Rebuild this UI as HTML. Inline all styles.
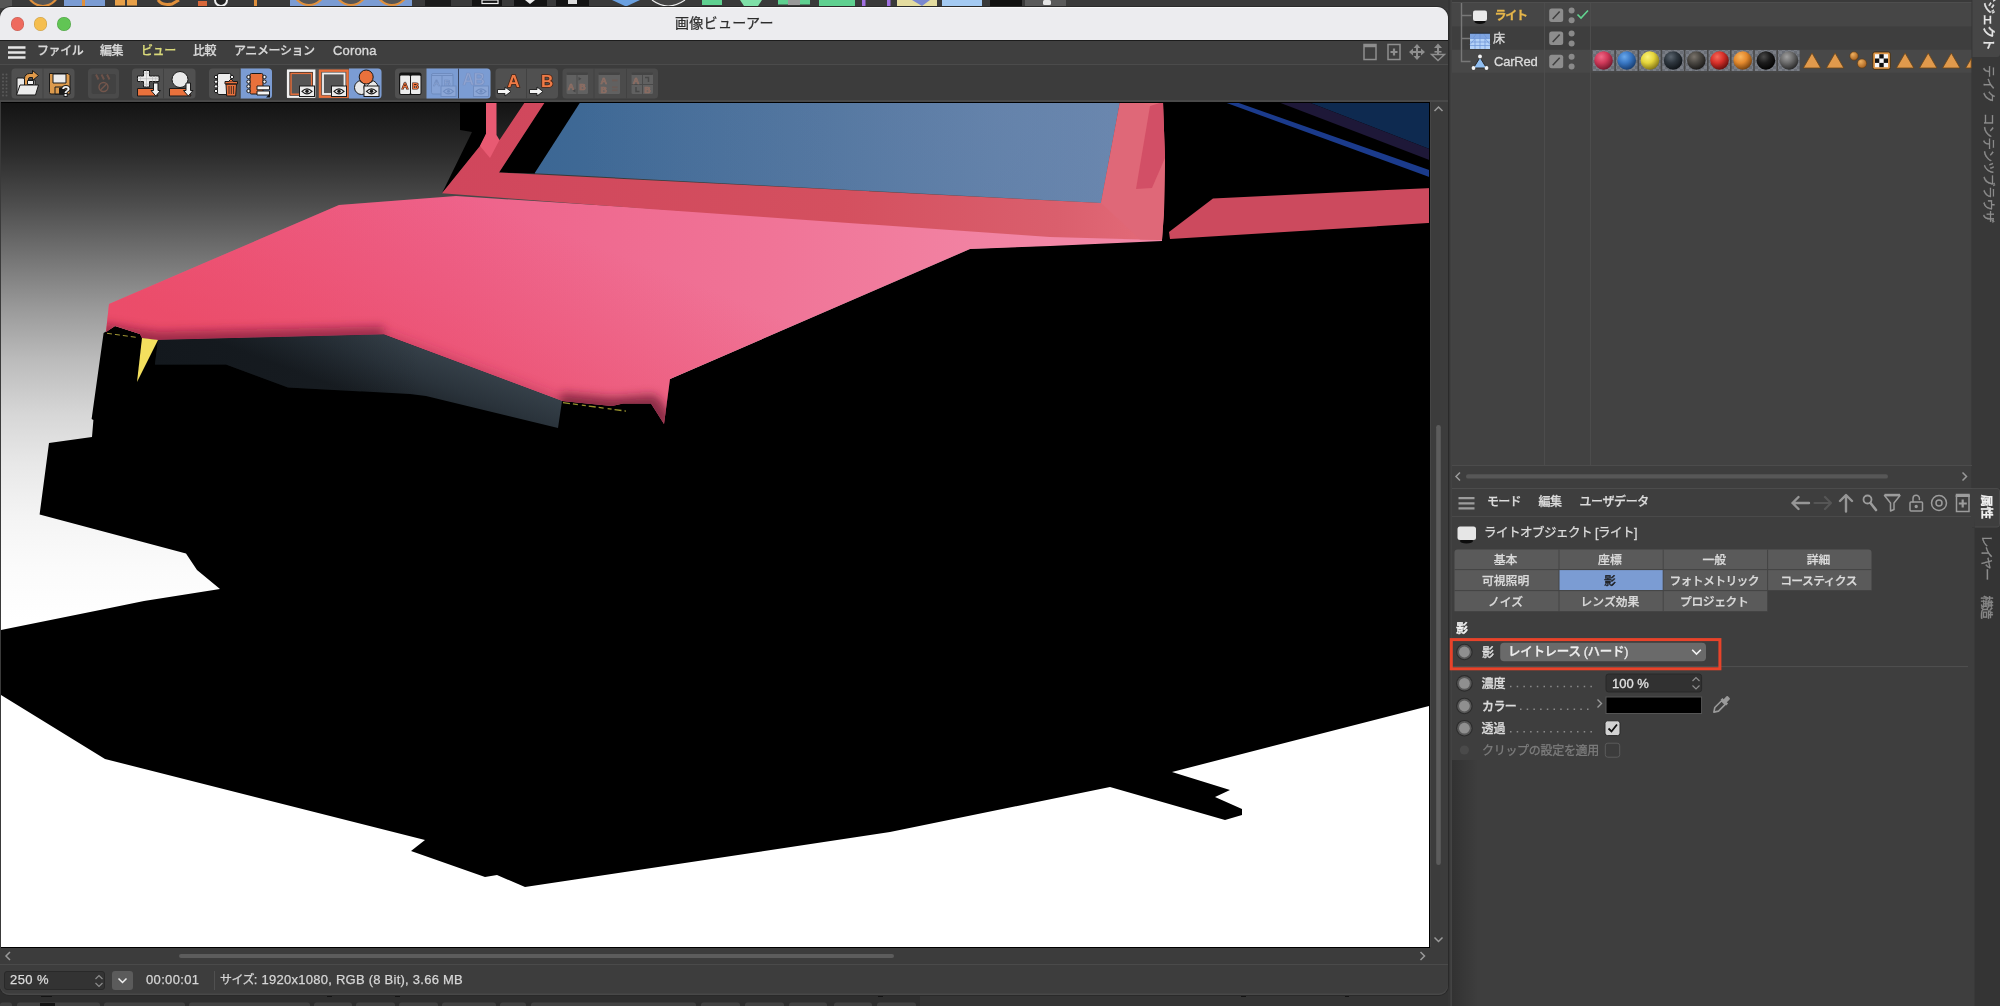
<!DOCTYPE html>
<html lang="ja">
<head>
<meta charset="utf-8">
<title>画像ビューアー</title>
<style>
*{box-sizing:border-box;margin:0;padding:0}
html,body{width:2000px;height:1006px;overflow:hidden;background:#3d3d3d}
body{position:relative;font-family:"Liberation Sans","Noto Sans CJK JP",sans-serif;font-size:13px;color:#d6d6d6;-webkit-font-smoothing:antialiased}
.abs{position:absolute}
#win,#right,#menubar,#status,#title{will-change:transform}
.t{position:absolute;white-space:nowrap;line-height:1;-webkit-text-stroke:.25px}
/* ---- backdrop (main app behind) ---- */
#backtop{left:0;top:0;width:1452px;height:8px;background:#3a3a3a}
#backbot{left:0;top:990px;width:1452px;height:16px;background:#383838}
/* ---- viewer window ---- */
#win{left:0;top:7px;width:1448px;height:988px;border-radius:11px 11px 9px 9px;background:#3e3e3e;overflow:hidden;box-shadow:0 0 0 1px #2a2a2a}
#win:after{content:"";position:absolute;left:0;top:0;right:0;bottom:0;border-radius:11px 11px 9px 9px;box-shadow:inset 0 -1.500px 0 #484848;pointer-events:none}
#title{left:0;top:0;width:1448px;height:33px;background:#ececef;border-top:1px solid #f9f9f9}
.tl{position:absolute;top:9.200px;width:13.800px;height:13.800px;border-radius:50%;box-shadow:inset 0 0 0 .6px rgba(0,0,0,.18)}
#menubar{left:0;top:33px;width:1448px;height:25px;background:#3f3f3f;border-top:1px solid #1c1c1c;border-bottom:1px solid #4b4b4b}
.mi{top:3.700px;font-weight:500;font-size:12px;color:#d8d8d8;letter-spacing:-.4px}
#toolbar{left:0;top:58px;width:1448px;height:37px;background:#3c3c3c;border-bottom:2px solid #494949}
.grp{position:absolute;top:3px;height:30px;background:#4d4d4d;border-radius:3px;overflow:hidden}
.grp i{position:absolute;top:0;height:30px;display:block}
.grp i.on{background:#7a9bd2}
.grp i.sep{border-left:1px solid #444}
#view{left:0;top:95px;width:1430px;height:846px;background:#3a3a3a}
#vscroll{left:1430px;top:95px;width:18px;height:846px;background:#3c3c3c}
#hscroll{left:0;top:941px;width:1448px;height:17px;background:#3c3c3c;border-bottom:1px solid #4a4a4a}
#status{left:0;top:958px;width:1448px;height:30px;background:#3d3d3d}
/* ---- right side ---- */
#right{left:1448px;top:0;width:552px;height:1006px;background:#3e3e3e}
</style>
</head>
<body>
<div class="abs" id="backtop">
<svg class="abs" style="left:0;top:0" width="1452" height="8" viewBox="0 0 1452 8">
<rect width="1452" height="8" fill="#3a3a3a"/>
<rect x="0" y="0" width="12" height="8" fill="#555"/>
<circle cx="43" cy="-10" r="16" fill="#555" stroke="#e0903c" stroke-width="2.200"/>
<rect x="64" y="0" width="41" height="8" fill="#7b9cd3"/><rect x="82" y="0" width="3" height="6" fill="#e0903c"/>
<rect x="115" y="0" width="10" height="5.500" fill="#e8a048"/><rect x="127" y="0" width="10" height="5.500" fill="#e8a048"/>
<path d="M158 0q4 6 14 4l7-4" fill="none" stroke="#e0903c" stroke-width="3"/>
<rect x="198" y="1" width="9" height="5" fill="#d8683a"/><circle cx="221" cy="0" r="6" fill="#222" stroke="#eee" stroke-width="2"/>
<rect x="254" y="0" width="3" height="6" fill="#e0903c"/>
<rect x="290" y="0" width="122" height="8" fill="#7b9cd3"/>
<circle cx="309" cy="-11" r="16" fill="#555" stroke="#e0903c" stroke-width="2.200"/><circle cx="351" cy="-11" r="16" fill="#555" stroke="#e0903c" stroke-width="2.200"/><circle cx="392" cy="-11" r="16" fill="#555" stroke="#e0903c" stroke-width="2.200"/>
<rect x="425" y="0" width="26" height="6" fill="#1c1c1c"/><rect x="472" y="0" width="30" height="6" fill="#141414"/><rect x="482" y="0" width="16" height="3.500" fill="none" stroke="#eee" stroke-width="1.200"/>
<rect x="514" y="0" width="33" height="6" fill="#141414"/><path d="M525 0l10 0-5 4z" fill="#eee"/>
<rect x="556" y="0" width="33" height="6" fill="#141414"/><rect x="568" y="0" width="9" height="4" fill="#ddd"/>
<path d="M612 0h28l-14 6.500z" fill="#6aa0e0"/>
<path d="M652 0q16 12 33 0" fill="#444" stroke="#eee" stroke-width="1.200"/>
<rect x="702" y="0" width="20" height="5" fill="#5fd090"/>
<path d="M740 0h22l-4 6h-14z" fill="#7fe0a8"/>
<rect x="778" y="0" width="32" height="4.500" fill="#5fd090"/><rect x="788" y="0" width="12" height="5" fill="#999"/>
<rect x="819" y="0" width="36" height="6" fill="#5fd090"/>
<rect x="862" y="0" width="3.500" height="6.500" fill="#a070e0"/><rect x="887" y="0" width="3.500" height="6.500" fill="#a070e0"/>
<rect x="897" y="0" width="40" height="6.500" fill="#e4dca0"/><path d="M912 0h18l-8 6z" fill="#7a88d0"/>
<rect x="942" y="0" width="40" height="6" fill="#a4caf2"/>
<rect x="990" y="0" width="32" height="6" fill="#111"/>
<rect x="1025" y="0" width="41" height="6.500" fill="#5a5a5a"/><rect x="1043" y="0" width="8" height="5" rx="1.500" fill="#e4e4e4"/>
</svg></div>
<div class="abs" id="backbot">
<svg class="abs" style="left:0;top:0" width="1452" height="16" viewBox="0 990 1452 16">
<rect x="0" y="990" width="1452" height="16" fill="#343434"/>
<rect x="0" y="990" width="920" height="16" fill="#2e2e2e"/>
<g fill="#424242"><rect x="0" y="1002.500" width="12" height="6" rx="2.500"/><rect x="17" y="1002.500" width="83" height="6" rx="2.500"/><rect x="104" y="1002.500" width="81" height="6" rx="2.500"/><rect x="189" y="1002.500" width="121" height="6" rx="2.500"/><rect x="314" y="1002.500" width="38" height="6" rx="2.500"/><rect x="356" y="1002.500" width="39" height="6" rx="2.500"/><rect x="399" y="1002.500" width="39" height="6" rx="2.500"/><rect x="442" y="1002.500" width="54" height="6" rx="2.500"/><rect x="500" y="1002.500" width="26" height="6" rx="2.500"/><rect x="531" y="1002.500" width="165" height="6" rx="2.500"/><rect x="701" y="1002.500" width="39" height="6" rx="2.500"/><rect x="745" y="1002.500" width="39" height="6" rx="2.500"/><rect x="789" y="1002.500" width="38" height="6" rx="2.500"/><rect x="834" y="1002.500" width="38" height="6" rx="2.500"/><rect x="877" y="1002.500" width="39" height="6" rx="2.500"/></g>
<g fill="#141414"><rect x="41" y="994.500" width="11" height="2.500"/><rect x="40" y="1003" width="15" height="3"/><rect x="327" y="994.500" width="5" height="2.500"/><rect x="395" y="994.500" width="5" height="2.500"/><rect x="878" y="994.500" width="5" height="2.500"/><rect x="1241" y="994.500" width="5" height="2.500"/><rect x="1345" y="994.500" width="4" height="2.500"/></g>
</svg></div>

<div class="abs" id="right">
<svg class="abs" style="left:0;top:0" width="552" height="1006" viewBox="1448 0 552 1006" font-family="'Liberation Sans','Noto Sans CJK JP',sans-serif">
<defs>
<pattern id="chk" x="0" y="0" width="6" height="6" patternUnits="userSpaceOnUse"><rect width="6" height="6" fill="#6a6e76"/><rect width="3" height="3" fill="#7a7e86"/><rect x="3" y="3" width="3" height="3" fill="#7a7e86"/></pattern>
<radialGradient id="s1" cx=".38" cy=".3" r=".75"><stop offset="0" stop-color="#f06a88"/><stop offset=".45" stop-color="#d03a5a"/><stop offset="1" stop-color="#6a1428"/></radialGradient>
<radialGradient id="s2" cx=".38" cy=".3" r=".75"><stop offset="0" stop-color="#6aa8ea"/><stop offset=".45" stop-color="#3a78c4"/><stop offset="1" stop-color="#14386a"/></radialGradient>
<radialGradient id="s3" cx=".38" cy=".3" r=".75"><stop offset="0" stop-color="#fbf27a"/><stop offset=".45" stop-color="#e6d63c"/><stop offset="1" stop-color="#7a6c14"/></radialGradient>
<radialGradient id="s4" cx=".38" cy=".3" r=".75"><stop offset="0" stop-color="#5a646e"/><stop offset=".45" stop-color="#2e363e"/><stop offset="1" stop-color="#0c1014"/></radialGradient>
<radialGradient id="s5" cx=".38" cy=".3" r=".75"><stop offset="0" stop-color="#7a746c"/><stop offset=".45" stop-color="#4a4742"/><stop offset="1" stop-color="#161514"/></radialGradient>
<radialGradient id="s6" cx=".38" cy=".3" r=".75"><stop offset="0" stop-color="#f46a5a"/><stop offset=".45" stop-color="#d8302a"/><stop offset="1" stop-color="#5a0c0a"/></radialGradient>
<radialGradient id="s7" cx=".38" cy=".3" r=".75"><stop offset="0" stop-color="#f8b660"/><stop offset=".45" stop-color="#e48a2e"/><stop offset="1" stop-color="#6a3a0c"/></radialGradient>
<radialGradient id="s8" cx=".38" cy=".3" r=".75"><stop offset="0" stop-color="#4a4a4a"/><stop offset=".45" stop-color="#1c1c1c"/><stop offset="1" stop-color="#000"/></radialGradient>
<radialGradient id="s9" cx=".38" cy=".3" r=".75"><stop offset="0" stop-color="#a0a0a0"/><stop offset=".45" stop-color="#6c6c6c"/><stop offset="1" stop-color="#222"/></radialGradient>
<radialGradient id="so" cx=".35" cy=".3" r=".8"><stop offset="0" stop-color="#f0b060"/><stop offset="1" stop-color="#a05a18"/></radialGradient>
<g id="tag"><rect x="0" y="0" width="14" height="13.500" rx="2.500" fill="#8d8d8d"/><path d="M3.500 10.500l7-7.500" stroke="#3e3e3e" stroke-width="1.500"/></g>
<g id="dots2"><circle cx="0" cy="0" r="3" fill="#8a8a8a"/><circle cx="0" cy="9.800" r="3" fill="#8a8a8a"/></g>
<g id="tri"><path d="M0 15.500l8.700-15 8.700 15z" fill="#e19a4c" stroke="#6a4418" stroke-width=".8" stroke-linejoin="round"/></g>
<linearGradient id="wsh" x1="1452" y1="0" x2="1478" y2="0" gradientUnits="userSpaceOnUse"><stop offset="0" stop-color="#000" stop-opacity=".2"/><stop offset="1" stop-color="#000" stop-opacity="0"/></linearGradient>
<g id="rad"><circle r="8.300" fill="#2c2c2c"/><circle r="7.200" fill="#585858"/><circle r="5.400" fill="#8f8f8f"/></g>
</defs>
<!-- window shadow edge -->
<rect x="1448" y="0" width="552" height="1006" fill="#3e3e3e"/>
<rect x="1448" y="0" width="3" height="1006" fill="#363636"/>
<rect x="1450.500" y="0" width="1.200" height="1006" fill="#464646"/>
<!-- object manager -->
<rect x="1452" y="0" width="520" height="466" fill="#424242"/>
<rect x="1452" y="3" width="520" height="23.700" fill="#464646"/>
<rect x="1452" y="26.700" width="520" height="23" fill="#3e3e3e"/>
<rect x="1452" y="49.700" width="520" height="23.200" fill="#484848"/>
<rect x="1452" y="0" width="520" height="3" fill="#3a3a3a"/>
<path d="M1452 2.500h520" stroke="#4e4e4e" stroke-width="1"/>
<path d="M1544.500 3v463M1590.500 3v463" stroke="#4c4c4c" stroke-width="1"/>
<path d="M1972 0v488" stroke="#353535" stroke-width="1"/>
<!-- tree lines -->
<path d="M1461.500 3v58.500h9M1461.500 15.500h10M1461.500 38.500h9" fill="none" stroke="#787878" stroke-width="1.400"/>
<!-- light icon -->
<ellipse cx="1480" cy="21.500" rx="5.500" ry="2.400" fill="#0c0c0c"/>
<rect x="1473" y="10.500" width="14" height="10.500" rx="2" fill="#eaeaea"/>
<!-- floor icon -->
<g><rect x="1470" y="33.500" width="20" height="15.500" fill="#b4d2f8"/><rect x="1470" y="33.500" width="20" height="5" fill="#7ea4e0"/>
<path d="M1470 38.500h20M1470 42h20M1470 45.500h20M1480 33.500v15.500M1475 38.500l-5 6M1485 38.500l5 6M1476.500 33.500l-3.500 5M1483.500 33.500l3.500 5M1475 38.500v10.500M1485 38.500v10.500" stroke="#6c94d6" stroke-width=".7" fill="none"/><path d="M1470 33.300h20" stroke="#16202c" stroke-width=".8"/></g>
<!-- CarRed icon -->
<g><path d="M1480 57.500l6.500 10.500h-13z" fill="#8fbdf0" stroke="#2a2a2a" stroke-width="1" stroke-linejoin="round"/><circle cx="1480" cy="56.500" r="1.900" fill="#f4f4f4"/><circle cx="1473.500" cy="68" r="1.900" fill="#f4f4f4"/><circle cx="1486.500" cy="68" r="1.900" fill="#f4f4f4"/></g>
<text x="1494.500" y="19.500" font-size="12" font-weight="bold" fill="#e6b64a" letter-spacing="-1.200" stroke="#e6b64a" stroke-width=".3">ライト</text>
<text x="1493" y="42.500" font-size="12" fill="#dcdcdc" stroke="#dcdcdc" stroke-width=".3">床</text>
<text x="1494" y="66" font-size="13" fill="#dcdcdc" letter-spacing="-.2" stroke="#dcdcdc" stroke-width=".3">CarRed</text>
<use href="#tag" x="1549.200" y="8.400"/><use href="#tag" x="1549.200" y="31.500"/><use href="#tag" x="1549.200" y="54.700"/>
<use href="#dots2" x="1571.600" y="10.500"/><use href="#dots2" x="1571.600" y="33.600"/><use href="#dots2" x="1571.600" y="56.700"/>
<path d="M1577.500 14.500l3.500 3.500 7-7.500" fill="none" stroke="#62d490" stroke-width="1.600"/>
<!-- materials -->
<g>
<rect x="1592.600" y="50" width="207" height="21" fill="url(#chk)"/>
<g fill="#484848"><rect x="1614.300" y="50" width="1.600" height="21"/><rect x="1637.500" y="50" width="1.600" height="21"/><rect x="1660.600" y="50" width="1.600" height="21"/><rect x="1683.800" y="50" width="1.600" height="21"/><rect x="1707" y="50" width="1.600" height="21"/><rect x="1730" y="50" width="1.600" height="21"/><rect x="1753.200" y="50" width="1.600" height="21"/><rect x="1776.400" y="50" width="1.600" height="21"/></g>
<circle cx="1603.500" cy="60.500" r="9.300" fill="url(#s1)"/>
<circle cx="1626.700" cy="60.500" r="9.300" fill="url(#s2)"/>
<circle cx="1649.900" cy="60.500" r="9.300" fill="url(#s3)"/>
<circle cx="1673.100" cy="60.500" r="9.300" fill="url(#s4)"/>
<circle cx="1696.300" cy="60.500" r="9.300" fill="url(#s5)"/>
<circle cx="1719.500" cy="60.500" r="9.300" fill="url(#s6)"/>
<circle cx="1742.700" cy="60.500" r="9.300" fill="url(#s7)"/>
<circle cx="1765.900" cy="60.500" r="9.300" fill="url(#s8)"/>
<circle cx="1789" cy="60.500" r="9.300" fill="url(#s9)"/>
</g>
<use href="#tri" x="1803.300" y="52.500"/><use href="#tri" x="1826.400" y="52.500"/>
<circle cx="1854" cy="56" r="4.200" fill="url(#so)" stroke="#5a3810" stroke-width=".6"/><circle cx="1862" cy="63.500" r="4.600" fill="url(#so)" stroke="#5a3810" stroke-width=".6"/>
<g><rect x="1872.800" y="52" width="17.500" height="17.300" rx="2" fill="#e19a4c" stroke="#3a2408" stroke-width=".8"/><rect x="1875" y="54.200" width="13" height="13" fill="#f8f8f8"/><g fill="#101010"><rect x="1879.300" y="54.200" width="4.400" height="4.300"/><rect x="1875" y="58.500" width="4.300" height="4.400"/><rect x="1883.700" y="58.500" width="4.300" height="4.400"/><rect x="1879.300" y="62.900" width="4.400" height="4.300"/></g></g>
<use href="#tri" x="1896.400" y="52.500"/><use href="#tri" x="1919.500" y="52.500"/><use href="#tri" x="1942.600" y="52.500"/>
<path d="M1965.700 68l5.500-9.500v9.500z" fill="#e19a4c" stroke="#6a4418" stroke-width=".8"/>
<!-- OM scrollbar -->
<path d="M1452 465.500h520" stroke="#4c4c4c"/>
<path d="M1460 472.500l-4 4 4 4M1962.500 472.500l4 4-4 4" fill="none" stroke="#9a9a9a" stroke-width="1.500"/>
<rect x="1466" y="474.200" width="422" height="4.400" rx="2.200" fill="#575757"/>
<path d="M1452 488.500h520" stroke="#4c4c4c"/>
<!-- attribute manager -->
<path d="M1458.500 498.200h16M1458.500 503.300h16M1458.500 508.400h16" stroke="#9c9c9c" stroke-width="2.200"/>
<g font-size="12" fill="#dcdcdc" font-weight="500" stroke="#dcdcdc" stroke-width=".25"><text x="1487" y="506" letter-spacing="-.7">モード</text><text x="1538.500" y="506" letter-spacing="-.4">編集</text><text x="1579.500" y="506" letter-spacing="-.4">ユーザデータ</text></g>
<g fill="none" stroke="#9c9c9c" stroke-width="1.800" stroke-linecap="round" stroke-linejoin="round">
<path d="M1809 503h-16.500M1798.500 497l-6 6 6 6" stroke-width="2.400" stroke="#969696"/>
<path d="M1814.500 503h16.500M1825 497l6 6-6 6" stroke="#565656" stroke-width="2.200"/>
<path d="M1846 511.500v-16M1840 501l6-6 6 6" stroke-width="2.400" stroke="#969696"/>
<circle cx="1867.500" cy="499.500" r="4"/><path d="M1870.500 503l5.500 7" stroke-width="2.600"/>
<path d="M1884.500 495.500h15.500l-6 7.500v6.500l-3.500 1.500v-8z" stroke-width="1.500"/><path d="M1884.500 495h15.500" stroke-width="2.400" stroke-linecap="butt"/>
<rect x="1910" y="502" width="12.500" height="9" rx="1" stroke-width="1.500"/><path d="M1913 502v-3.500a3.200 3.200 0 0 1 6.400 0v1" stroke-width="1.500"/><circle cx="1916.200" cy="506.500" r=".8"/>
<circle cx="1939" cy="503" r="7.500" stroke-width="1.500"/><circle cx="1939" cy="503" r="3" stroke-width="1.500"/>
<rect x="1956.500" y="494.500" width="12.500" height="17" stroke-width="1.500" stroke-linejoin="miter"/><path d="M1956.500 496h12.500" stroke-width="2"/><path d="M1962.700 499.500v8M1958.800 503.500h8" stroke-width="2.200" stroke-linecap="butt"/>
</g>
<path d="M1452 516.500h523" stroke="#4a4a4a"/>
<ellipse cx="1466.500" cy="541" rx="6.500" ry="2.400" fill="#0c0c0c"/><rect x="1457.500" y="526.500" width="18.500" height="13.500" rx="2.500" fill="#e6e6e6"/>
<text x="1484" y="537.200" font-size="12.500" fill="#dcdcdc" letter-spacing="-.5" stroke="#dcdcdc" stroke-width=".3">ライトオブジェクト [ライト]</text>
<!-- tabs -->
<g>
<path d="M1457.500 549.600h411a3 3 0 0 1 3 3v37.600h-103.700v21h-313.300v-58.600a3 3 0 0 1 3-3z" fill="#5a5a5a"/>
<rect x="1559" y="570" width="104.200" height="20.200" fill="#7b9cd3"/>
<path d="M1454.500 569.600h417.300M1454.500 590.600h417.300M1559 549.600v61.600M1663.200 549.600v61.600M1767.600 549.600v61.600" stroke="#444" stroke-width="1"/>
<g font-size="11.800" fill="#dadada" font-weight="500" text-anchor="middle" transform="translate(-1.200 0)" stroke="#dadada" stroke-width=".25">
<text x="1506.800" y="564">基本</text><text x="1611.100" y="564">座標</text><text x="1715.400" y="564">一般</text><text x="1819.700" y="564">詳細</text>
<text x="1506.800" y="585">可視照明</text><text x="1611.100" y="585" fill="#1c1c1c" stroke="#1c1c1c" stroke-width=".3">影</text><text x="1715.400" y="585" letter-spacing="-.6">フォトメトリック</text><text x="1819.700" y="585" letter-spacing="-.6">コースティクス</text>
<text x="1506.800" y="606">ノイズ</text><text x="1611.100" y="606">レンズ効果</text><text x="1715.400" y="606" letter-spacing="-.4">プロジェクト</text>
</g>
</g>
<text x="1456" y="632.500" font-size="12" font-weight="bold" fill="#f0f0f0" stroke="#f0f0f0" stroke-width=".3">影</text>
<!-- separator -->
<path d="M1452 666.600h516" stroke="#505050"/>
<!-- shadow row -->
<use href="#rad" x="1464.400" y="652"/>
<text x="1482" y="656.500" font-size="12" fill="#dcdcdc" font-weight="500" stroke="#dcdcdc" stroke-width=".3">影</text>
<rect x="1500.200" y="642.800" width="205.800" height="18.400" rx="4" fill="#6a6a6a"/>
<text x="1508" y="655.700" font-size="12.500" fill="#eeeeee" letter-spacing="-.3" font-weight="500" stroke="#eeeeee" stroke-width=".3">レイトレース (ハード)</text>
<path d="M1692.200 649.800l4.300 4.300 4.300-4.300" fill="none" stroke="#f2f2f2" stroke-width="1.600"/>
<rect x="1451.300" y="639.600" width="268.600" height="29.200" fill="none" stroke="#e8432a" stroke-width="3"/>
<!-- density -->
<use href="#rad" x="1464.400" y="683.400"/>
<text x="1481.500" y="687.700" font-size="12" fill="#dcdcdc" font-weight="500" stroke="#dcdcdc" stroke-width=".3">濃度</text>
<path d="M1510 686.500h86" stroke="#8a8a8a" stroke-width="1.500" stroke-dasharray="1.500 5.200"/>
<rect x="1606" y="674" width="95.600" height="18" rx="2.500" fill="#313131" stroke="#282828" stroke-width="1"/>
<text x="1612" y="688" font-size="13" fill="#e2e2e2" stroke="#e2e2e2" stroke-width=".3">100 %</text>
<path d="M1692.500 681l3.500-3.500 3.500 3.500M1692.500 685.500l3.500 3.500 3.500-3.500" fill="none" stroke="#8c8c8c" stroke-width="1.200"/>
<!-- colour -->
<use href="#rad" x="1464.400" y="706"/>
<text x="1482" y="710.500" font-size="12" fill="#dcdcdc" letter-spacing="-.6" font-weight="500" stroke="#dcdcdc" stroke-width=".3">カラー</text>
<path d="M1520 709.300h72" stroke="#8a8a8a" stroke-width="1.500" stroke-dasharray="1.500 5.200"/>
<path d="M1597.500 699.500l4 4-4 4" fill="none" stroke="#9a9a9a" stroke-width="1.400"/>
<rect x="1606" y="697" width="95.600" height="16.500" fill="#000" stroke="#555" stroke-width="1"/>
<g transform="translate(1721 705) rotate(45)"><rect x="-2.200" y="-11" width="4.400" height="6" rx="1" fill="#9a9a9a"/><rect x="-4" y="-6" width="8" height="2.600" fill="#9a9a9a"/><path d="M-2.600 -3.400h5.200v9.500l-2.600 4-2.600-4z" fill="none" stroke="#9a9a9a" stroke-width="1.600" stroke-linejoin="round"/></g>
<!-- transmit -->
<use href="#rad" x="1464.400" y="728.200"/>
<text x="1481.500" y="732.500" font-size="12" fill="#dcdcdc" font-weight="500" stroke="#dcdcdc" stroke-width=".3">透過</text>
<path d="M1510 731.700h86" stroke="#8a8a8a" stroke-width="1.500" stroke-dasharray="1.500 5.200"/>
<rect x="1605" y="720.800" width="15" height="14.800" rx="2.500" fill="#d2d2d2" stroke="#2a2a2a" stroke-width="1"/>
<path d="M1608.500 728.500l3 3 5.500-7" fill="none" stroke="#111" stroke-width="1.800"/>
<!-- clip -->
<circle cx="1464.400" cy="750" r="4.600" fill="#4a4a4a"/>
<text x="1482" y="754.500" font-size="12" fill="#7c7c7c" letter-spacing="-.3" stroke="#7c7c7c" stroke-width=".3">クリップの設定を適用</text>
<rect x="1605.300" y="743.200" width="14.400" height="14" rx="2.500" fill="#3c3c3c" stroke="#5c5c5c" stroke-width="1"/>
<rect x="1452" y="760" width="26" height="246" fill="url(#wsh)"/>
<!-- right tab strip -->
<rect x="1972.500" y="0" width="27.500" height="1006" fill="#383838"/>
<path d="M1972.500 0h27.500v54a3 3 0 0 1-3 3h-24.500z" fill="#464646"/>
<rect x="1972" y="488" width="28" height="518" fill="#343434"/><path d="M1972 488.500h25a2.500 2.500 0 0 1 2.500 2.500v33.500a2.500 2.500 0 0 1-2.500 2.500h-22.500" fill="#3e3e3e" stroke="#4a4a4a" stroke-width="1"/><rect x="1971" y="489" width="3.500" height="38" fill="#3e3e3e"/><rect x="1972" y="527.500" width="2.500" height="480" fill="#3e3e3e"/>
<g font-size="12.500">
<text transform="translate(1983.500 -23) rotate(90)" fill="#e4e4e4" font-weight="500" letter-spacing="-.3" stroke="#e4e4e4" stroke-width=".3">オブジェクト</text>
<text transform="translate(1983.500 65) rotate(90)" fill="#8e8e8e" letter-spacing=".2" stroke="#8e8e8e" stroke-width=".3">テイク</text>
<text transform="translate(1983.500 113) rotate(90)" fill="#8e8e8e" letter-spacing="-.3" stroke="#8e8e8e" stroke-width=".3">コンテンツブラウザ</text>
<text transform="translate(1982 494.500) rotate(90)" fill="#f0f0f0" font-weight="bold" letter-spacing="-.5" stroke="#f0f0f0" stroke-width=".3">属性</text>
<text transform="translate(1982 535) rotate(90)" fill="#8e8e8e" letter-spacing="-1.300" stroke="#8e8e8e" stroke-width=".3">レイヤー</text>
<text transform="translate(1982 595.500) rotate(90)" fill="#868686" font-weight="500" letter-spacing="-1.200" stroke="#868686" stroke-width=".3">構造</text>
</g>
</svg>
</div>


<div class="abs" id="win">
  <div class="abs" id="title">
    <span class="tl" style="left:10.500px;background:#ee6a5e"></span>
    <span class="tl" style="left:33.700px;background:#f5be4f"></span>
    <span class="tl" style="left:57px;background:#61c554"></span>
    <span class="t" style="left:675px;top:8px;font-size:14px;color:#2e2e2e;letter-spacing:.3px">画像ビューアー</span>
  </div>
  <div class="abs" id="menubar">
    <svg class="abs" style="left:8px;top:5px" width="18" height="14" viewBox="0 0 18 14"><path d="M0 1.500h17.500M0 6.500h17.500M0 11.500h17.500" stroke="#e6e6e6" stroke-width="2.400"/></svg>
    <span class="t mi" style="left:37px">ファイル</span>
    <span class="t mi" style="left:100px">編集</span>
    <span class="t mi" style="left:141px;color:#d9d97a">ビュー</span>
    <span class="t mi" style="left:193px">比較</span>
    <span class="t mi" style="left:234px">アニメーション</span>
    <span class="t mi" style="left:333px;font-size:13px;top:3.200px;font-weight:400;letter-spacing:.15px;-webkit-text-stroke:.35px #d8d8d8">Corona</span>
    <svg class="abs" style="left:1362px;top:.5px" width="86" height="20" viewBox="0 0 86 20" fill="none" stroke="#8e8e8e" stroke-width="1.500">
      <rect x="2" y="2.500" width="12" height="15"/><path d="M2 4h12" stroke-width="2.500"/>
      <rect x="26" y="2.500" width="12" height="15"/><path d="M32 6.500v7M28.500 10h7" stroke-width="2.200"/>
      <g fill="#8e8e8e" stroke="none"><path d="M55 2l3.500 4h-7zM55 18l-3.500-4h7zM47 10l4-3.500v7zM63 10l-4 3.500v-7z"/><rect x="54" y="5" width="2" height="10"/><rect x="50" y="9" width="10" height="2"/></g>
      <g fill="#8e8e8e" stroke="none"><path d="M76 1.500l4 4.500h-8z"/><rect x="75" y="5" width="2" height="8"/><rect x="72.500" y="9" width="7" height="1.600"/><path d="M69.500 12.500h13l-6.500 6z" fill="none" stroke="#8e8e8e" stroke-width="1.400"/></g>
    </svg>
  </div>
  <div class="abs" id="toolbar">
<svg class="abs" style="left:0;top:0" width="700" height="36" viewBox="0 65 700 36" font-family="'Liberation Sans',sans-serif" font-weight="bold">
<!-- grip -->
<g fill="#595959"><circle cx="3" cy="74.500" r="1"/><circle cx="6.500" cy="74.500" r="1"/><circle cx="3" cy="78" r="1"/><circle cx="6.500" cy="78" r="1"/><circle cx="3" cy="81.500" r="1"/><circle cx="6.500" cy="81.500" r="1"/><circle cx="3" cy="85" r="1"/><circle cx="6.500" cy="85" r="1"/><circle cx="3" cy="88.500" r="1"/><circle cx="6.500" cy="88.500" r="1"/><circle cx="3" cy="92" r="1"/><circle cx="6.500" cy="92" r="1"/><circle cx="3" cy="95.500" r="1"/><circle cx="6.500" cy="95.500" r="1"/></g>
<!-- groups -->
<g>
<rect x="11.500" y="68.500" width="63" height="30" rx="3.500" fill="#505050"/>
<rect x="88" y="68.500" width="31" height="30" rx="3.500" fill="#4a4a4a"/>
<rect x="132" y="68.500" width="63.500" height="30" rx="3.500" fill="#505050"/>
<rect x="209" y="68.500" width="63" height="30" rx="3.500" fill="#505050"/>
<path d="M240.500 68.500h28a3.500 3.500 0 0 1 3.500 3.500v23a3.500 3.500 0 0 1-3.500 3.500h-28z" fill="#7b9cd3"/>
<rect x="286" y="68.500" width="95.500" height="30" rx="3.500" fill="#505050"/>
<path d="M349 68.500h29a3.500 3.500 0 0 1 3.500 3.500v23a3.500 3.500 0 0 1-3.500 3.500h-29z" fill="#7b9cd3"/>
<rect x="395" y="68.500" width="95.500" height="30" rx="3.500" fill="#505050"/>
<path d="M426.500 68.500h60.500a3.500 3.500 0 0 1 3.500 3.500v23a3.500 3.500 0 0 1-3.500 3.500h-60.500z" fill="#7b9cd3"/>
<rect x="495.500" y="68.500" width="62.500" height="30" rx="3.500" fill="#505050"/>
<rect x="562.500" y="68.500" width="95.500" height="30" rx="3.500" fill="#4b4b4b"/>
<g stroke="#424242" stroke-width="1"><path d="M43 68.500v30M163.500 68.500v30M240 68.500v30M526.500 68.500v30M594 68.500v30M626.500 68.500v30"/></g>
<path d="M458.500 68.500v30" stroke="#3a4660" stroke-width="1"/>
</g>
<!-- 1 open -->
<g stroke="#1a1a1a" stroke-width="1" stroke-linejoin="round">
<path d="M17 78h6.500l1.500 2h10v14h-18z" fill="#e9e9e9"/>
<path d="M24.500 86v-7.500a5 5 0 0 1 5-5h3v-3l6 5-6 5v-3h-2.500a1.500 1.500 0 0 0-1.500 1.500v7z" fill="#e09a4a"/>
<rect x="27.500" y="80.500" width="6" height="4" fill="#f2f2f2"/>
<path d="M20 85h18.500l-3 10h-19z" fill="#ececec"/>
</g>
<!-- 2 save -->
<g stroke="#1a1a1a" stroke-width="1" stroke-linejoin="round">
<path d="M49.500 73.500h18.500l2 2v18.500h-19a1.500 1.500 0 0 1-1.500-1.500z" fill="#dc9a4c"/>
<rect x="53" y="74" width="13" height="9" fill="#ececec"/>
<rect x="55" y="87" width="10" height="7" fill="#dc9a4c"/>
<rect x="59.500" y="88" width="5" height="6" fill="#1a1a1a"/>
</g>
<text x="61.500" y="95.500" font-size="14.500" fill="#f4f4f4" stroke="#1a1a1a" stroke-width="2" paint-order="stroke">?</text>
<!-- 3 disabled clapper -->
<rect x="91.500" y="74" width="24.500" height="20" rx="2" fill="#424242"/>
<g stroke="#6c5249" stroke-width="2"><path d="M96 74.500l2.500 5M101.500 74.500l2.500 5M107 74.500l2.500 5"/></g>
<circle cx="103.500" cy="87" r="4.500" fill="none" stroke="#73564c" stroke-width="1.400"/><path d="M100.500 90l6-6" stroke="#73564c" stroke-width="1.400"/>
<!-- 4 cross + base -->
<g>
<path d="M143.500 70.500h6v5.500h5.500v-0h4v5.500h-9.500v5.500h-6v-5.500h-6v-5.500h6z" fill="#ececec" stroke="#1a1a1a" stroke-width="1" stroke-linejoin="round"/>
<path d="M143.500 73.200h6M137.500 78.700h21.500M143.500 84.200h6M140.500 76v5.500M146.500 70.500v16.500M152.500 76v5.500M155.700 76v5.500" stroke="#bdbdbd" stroke-width=".7" fill="none"/>
<path d="M137.500 88.500h17l3.500 7.500h-20.500z" fill="#e9713c" stroke="#1a1a1a" stroke-width="1" stroke-linejoin="round"/>
<path d="M153.500 83h4.500v7.500h2.500l-4.700 5.500-4.800-5.500h2.500z" fill="#f2f2f2" stroke="#1a1a1a" stroke-width="1" stroke-linejoin="round"/>
</g>
<!-- 5 circle + base -->
<g stroke="#1a1a1a" stroke-width="1" stroke-linejoin="round">
<circle cx="180" cy="79.500" r="8" fill="#e9e9e9"/>
<path d="M169.500 88.500h18l3.500 7.500h-21.500z" fill="#e9713c"/>
<path d="M186 83h4.500v7.500h2.500l-4.700 5.500-4.800-5.500h2.500z" fill="#f2f2f2"/>
</g>
<!-- 6 notebook + trash -->
<g stroke="#1a1a1a" stroke-width="1" stroke-linejoin="round">
<rect x="217.500" y="73.500" width="13.500" height="21" rx="1.500" fill="#ececec"/>
<g fill="#f4f4f4"><circle cx="216" cy="77" r="1.700"/><circle cx="216" cy="81.700" r="1.700"/><circle cx="216" cy="86.400" r="1.700"/><circle cx="216" cy="91" r="1.700"/><circle cx="232" cy="77" r="1.700"/></g>
<path d="M225 81.500h12.500v2.500h-12.500zM226 84h10.500l-.8 12h-9z" fill="#e9713c"/>
<path d="M228.500 81.500l2.500-2.500 2.500 2.500" fill="#e9713c"/>
<path d="M229 86v8M231.300 86v8M233.600 86v8" stroke-width=".8"/>
</g>
<!-- 7 notebook orange + bars -->
<g stroke="#1a1a1a" stroke-width="1" stroke-linejoin="round">
<rect x="250" y="73.500" width="13" height="20.500" rx="1.500" fill="#e9713c"/>
<g fill="#f4f4f4"><circle cx="248.500" cy="77" r="1.700"/><circle cx="248.500" cy="81.700" r="1.700"/><circle cx="248.500" cy="86.400" r="1.700"/><circle cx="248.500" cy="91" r="1.700"/><circle cx="264.500" cy="77" r="1.700"/><circle cx="264.500" cy="81.700" r="1.700"/></g>
<rect x="257" y="86" width="12.500" height="3.800" fill="#f4f4f4"/><rect x="257" y="91" width="12.500" height="4" fill="#f4f4f4"/>
<path d="M270 93.500v4h-4z" fill="#101010" stroke="none"/>
</g>
<!-- eye badge symbol -->
<defs>
<g id="eye"><rect x="0" y="0" width="15" height="10.500" fill="#ececec" stroke="#1a1a1a" stroke-width="1"/><path d="M2.500 5.300q5-5 10 0q-5 5-10 0z" fill="#ececec" stroke="#1a1a1a" stroke-width="1.200"/><circle cx="7.500" cy="5.300" r="1.700" fill="#1a1a1a"/></g>
<g id="eyed"><rect x="0" y="0" width="15" height="10.500" fill="#8ba6d6" stroke="#6f8cbf" stroke-width="1"/><path d="M2.500 5.300q5-5 10 0q-5 5-10 0z" fill="none" stroke="#6f8cbf" stroke-width="1.200"/><circle cx="7.500" cy="5.300" r="1.500" fill="#6f8cbf"/></g>
</defs>
<!-- 8 -->
<rect x="288.200" y="70.700" width="26" height="26" fill="#555" stroke="#f0f0f0" stroke-width="2.400"/>
<rect x="290.800" y="73.200" width="21" height="21.200" fill="none" stroke="#e9713c" stroke-width="1.800"/>
<rect x="290" y="72.400" width="22.600" height="22.800" fill="none" stroke="#1a1a1a" stroke-width=".5"/>
<use href="#eye" x="299.500" y="86"/>
<!-- 9 -->
<rect x="320" y="70.700" width="27.500" height="26" fill="#555" stroke="#e9713c" stroke-width="2.400"/>
<rect x="323" y="73.500" width="21.500" height="20.500" fill="none" stroke="#f0f0f0" stroke-width="1.800"/>
<use href="#eye" x="331.500" y="86"/>
<!-- 10 -->
<g stroke="#1a1a1a" stroke-width="1">
<circle cx="361.500" cy="87.500" r="7" fill="#e9e9e9"/><circle cx="371" cy="87.500" r="7" fill="#e9e9e9"/><circle cx="366.200" cy="77" r="7" fill="#e9713c"/>
<path d="M360 81.500q6 2 6.200 8q.5-6 6.500-8" fill="none" stroke-width=".8"/>
</g>
<use href="#eye" x="364" y="86"/>
<!-- 11 -->
<rect x="399" y="72.500" width="22.500" height="22.500" rx="2.500" fill="#141414"/>
<rect x="400.200" y="75.500" width="9.800" height="18.500" rx="1" fill="#ececec"/><rect x="411" y="75.500" width="9.500" height="18.500" rx="1" fill="#ececec"/>
<g font-size="9" fill="#e9713c" stroke="#3a1a10" stroke-width="1.200" paint-order="stroke"><text x="401.800" y="88.500">A</text><text x="412.300" y="88.500">B</text></g>
<!-- 12 dimmed -->
<g fill="none" stroke="#6f8cbf" stroke-width="1">
<rect x="431.500" y="73.500" width="21.500" height="20.500" rx="1.500" fill="#86a3d6"/><path d="M431.500 75.500h21.500M442 75.500v18" />
</g>
<g font-size="9" fill="#93a8d4" stroke="#6f8cbf" stroke-width=".6"><text x="433.200" y="86">A</text><text x="444" y="86">B</text></g>
<use href="#eyed" x="441" y="86"/>
<!-- 13 dimmed -->
<g font-size="16" fill="#90a4d0" stroke="#7790c2" stroke-width=".7"><text x="462.500" y="84.500" letter-spacing="-.5">AB</text></g>
<use href="#eyed" x="473.500" y="86"/>
<!-- 14, 15 -->
<g font-size="17" fill="#ee7a46" stroke="#4a2414" stroke-width="1.600" paint-order="stroke"><text x="507.500" y="86.500">A</text><text x="541" y="86.500">B</text></g>
<g fill="#f4f4f4" stroke="#1a1a1a" stroke-width=".9" stroke-linejoin="round"><path d="M497.500 89.500h7.500v-2.500l6 4.500-6 4.500v-2.500h-7.500z"/><path d="M529.500 89.500h7.500v-2.500l6 4.500-6 4.500v-2.500h-7.500z"/></g>
<!-- 16-18 disabled -->
<g>
<rect x="566.500" y="73.500" width="21.500" height="20.500" rx="1.500" fill="#616161"/><rect x="566.500" y="72.500" width="21.500" height="2.500" rx="1" fill="#444"/><path d="M577 75v19" stroke="#4a4a4a"/>
<rect x="598.500" y="73.500" width="21.500" height="20.500" rx="1.500" fill="#616161"/><rect x="598.500" y="72.500" width="21.500" height="2.500" rx="1" fill="#444"/>
<rect x="631.500" y="73.500" width="21.500" height="20.500" rx="1.500" fill="#616161"/><rect x="631.500" y="72.500" width="21.500" height="2.500" rx="1" fill="#444"/><path d="M642.500 75v19M631.500 84.500h21.500" stroke="#4a4a4a"/>
<g font-size="9" fill="#86695f" stroke="#8f7066" stroke-width=".6"><text x="567.800" y="89.500">A</text><text x="579.300" y="89.500">B</text><text x="600.500" y="84">A</text><text x="600.500" y="93">B</text><text x="632.800" y="84">A</text><text x="644.300" y="93">B</text></g>
<g fill="#6a5a55"><rect x="612" y="79.500" width="5.500" height="1.800"/><rect x="612" y="86.500" width="5.500" height="1.600"/><rect x="612" y="89.500" width="5.500" height="1.600"/></g>
<path d="M578.500 77l3 1.700-3 1.700zM575.500 89l-3 1.700 3 1.700z" fill="#474747"/>
<path d="M645 77.500h3.500v4.500M636 87v4.500h3.500" fill="none" stroke="#474747" stroke-width="1.500"/>
</g>
</svg>
</div>
  <div class="abs" id="view">
<svg width="1430" height="846" viewBox="0 102 1430 846" style="position:absolute;left:0;top:0" shape-rendering="geometricPrecision">
<defs>
<linearGradient id="bg" x1="0" y1="102" x2="0" y2="620" gradientUnits="userSpaceOnUse">
<stop offset="0" stop-color="#131313"/><stop offset=".1" stop-color="#2c2c2c"/><stop offset=".2" stop-color="#4e4e4e"/><stop offset=".3" stop-color="#747474"/><stop offset=".4" stop-color="#9a9a9a"/><stop offset=".5" stop-color="#bcbcbc"/><stop offset=".6" stop-color="#d6d6d6"/><stop offset=".7" stop-color="#e8e8e8"/><stop offset=".8" stop-color="#f4f4f4"/><stop offset=".9" stop-color="#fbfbfb"/><stop offset="1" stop-color="#ffffff"/>
</linearGradient>
<linearGradient id="hood" x1="120" y1="0" x2="1050" y2="0" gradientUnits="userSpaceOnUse">
<stop offset="0" stop-color="#ed587c"/><stop offset=".35" stop-color="#ee628a"/><stop offset=".7" stop-color="#f07497"/><stop offset="1" stop-color="#f287a6"/>
</linearGradient>
<linearGradient id="hood2" x1="520" y1="215" x2="440" y2="420" gradientUnits="userSpaceOnUse">
<stop offset="0" stop-color="#ea4560" stop-opacity="0"/><stop offset=".5" stop-color="#ea4560" stop-opacity=".3"/><stop offset="1" stop-color="#ea4660" stop-opacity=".65"/>
</linearGradient>
<linearGradient id="frame" x1="450" y1="0" x2="1165" y2="0" gradientUnits="userSpaceOnUse">
<stop offset="0" stop-color="#d0465c"/><stop offset=".55" stop-color="#d4505f"/><stop offset=".85" stop-color="#da5f6d"/><stop offset="1" stop-color="#e46c7a"/>
</linearGradient>
<linearGradient id="glass" x1="540" y1="140" x2="1110" y2="140" gradientUnits="userSpaceOnUse">
<stop offset="0" stop-color="#3c6794"/><stop offset=".5" stop-color="#4d729c"/><stop offset="1" stop-color="#6583ab"/>
</linearGradient>
<linearGradient id="grille" x1="425" y1="338" x2="398" y2="410" gradientUnits="userSpaceOnUse">
<stop offset="0" stop-color="#3a454e"/><stop offset=".5" stop-color="#2a333b"/><stop offset="1" stop-color="#181d22"/>
</linearGradient>
<linearGradient id="grilleL" x1="158" y1="0" x2="420" y2="0" gradientUnits="userSpaceOnUse">
<stop offset="0" stop-color="#10151a" stop-opacity=".6"/><stop offset="1" stop-color="#10151a" stop-opacity="0"/>
</linearGradient>
<linearGradient id="fringe" x1="0" y1="312" x2="0" y2="342" gradientUnits="userSpaceOnUse">
<stop offset="0" stop-color="#8e2a44" stop-opacity="0"/><stop offset=".6" stop-color="#8e2a44" stop-opacity=".3"/><stop offset="1" stop-color="#7a2038" stop-opacity=".75"/>
</linearGradient>
<radialGradient id="tipsh" cx="640" cy="408" r="70" gradientUnits="userSpaceOnUse" gradientTransform="translate(640 408) scale(1 .55) translate(-640 -408)">
<stop offset="0" stop-color="#8a2840" stop-opacity=".7"/><stop offset="1" stop-color="#8a2840" stop-opacity="0"/>
</radialGradient>
<radialGradient id="glassHi" cx="1000" cy="110" r="420" gradientUnits="userSpaceOnUse">
<stop offset="0" stop-color="#7a92b8" stop-opacity=".3"/><stop offset="1" stop-color="#7a92b8" stop-opacity="0"/>
</radialGradient>
<filter id="blur5" x="-10%" y="-50%" width="120%" height="200%"><feGaussianBlur stdDeviation="5"/></filter>
<clipPath id="imgclip"><rect x="1" y="103" width="1428" height="844"/></clipPath>
<clipPath id="hoodclip"><polygon points="339,205 456,196 1050,234 1162,238 1162,241 1050,246 970,249 670,379 664,424 651,403.600 623,403.600 612,406 562,401 384,334.400 158,340 142,338 140,334 115,326 106,332 109,304"/></clipPath>

</defs>
<rect x="1" y="101" width="1429" height="847" fill="#000"/>
<g clip-path="url(#imgclip)">
<rect x="1" y="102" width="1428" height="846" fill="url(#bg)"/>
<!-- black body + shadow -->
<polygon fill="#000" points="103.600,333 115,326 140,334 158,340 384,334 562,401 670,379 970,249 1162,240 1163,102 1432,102 1432,705.200 1172,772 1230,790 1215,797 1242,809 1242,815 1225,820 1110,787 890,832 525,887 497,875 485,877 411,851 425,840 105,759 1,695 1,630 100,610 144,601 220,589 197,570 186,553.600 39.600,514.400 49,443 92,437 93.400,420 91.600,419"/>
<!-- mirror shadow -->
<polygon fill="#000" points="460,102 486,102 486,134 480,146 442,193.300 472,132 460,130"/>
<polygon fill="#000" points="545,102 581,102 535,173.500 499,172.600"/>
<!-- hood -->
<polygon fill="url(#hood)" points="339,205 456,196 1050,234 1162,238 1162,241 1050,246 970,249 670,379 664,424 651,403.600 623,403.600 612,406 562,401 384,334.400 158,340 142,338 140,334 115,326 106,332 109,304"/>
<polygon fill="url(#hood2)" points="339,205 456,196 1050,234 1162,238 1162,241 1050,246 970,249 670,379 664,424 651,403.600 623,403.600 612,406 562,401 384,334.400 158,340 142,338 140,334 115,326 106,332 109,304"/>
<g clip-path="url(#hoodclip)"><g filter="url(#blur5)" fill="none" stroke-linejoin="round"><path d="M100,333 L142,340 L158,342 L384,336.500" stroke="#6a1830" stroke-width="20" opacity=".6"/><path d="M384,336.500 L562,403" stroke="#a02c48" stroke-width="12" opacity=".35"/><path d="M560,404 L612,409 L651,406 L664,426" stroke="#6a1830" stroke-width="22" opacity=".75"/></g></g>
<!-- grille -->
<polygon fill="url(#grille)" points="158,340 384,334.400 562,401 558,428 426,396 410,394 288,387.400 226,364.400 155,364.400"/>
<polygon fill="url(#grilleL)" points="158,340 384,334.400 562,401 558,428 426,396 410,394 288,387.400 226,364.400 155,364.400"/>
<path d="M107 333.300l29 4" stroke="#e8d84a" stroke-opacity=".7" stroke-width="1" stroke-dasharray="5 3" fill="none"/>
<path d="M563 402.600l63 8.500" stroke="#d8d040" stroke-opacity=".7" stroke-width="1.300" stroke-dasharray="7 3 5 4 4 3" fill="none"/>
<!-- yellow lamp -->
<polygon fill="#f4e05e" points="142,338 158,340 137,382"/>
<!-- windshield -->
<polygon fill="url(#glass)" points="580.400,102 1120,102 1101,203 534.600,173.300"/>
<polygon fill="url(#glassHi)" points="580.400,102 1120,102 1101,203 534.600,173.300"/>
<!-- A pillar left + lower frame -->
<polygon fill="url(#frame)" points="442,193.300 480,146 486,134 499.500,140 525,102 545,102 499,172.600 1101,203 1120,102 1163,102 1165,158 1164,212 1162,240 1050,237 650,209"/>
<polygon fill="#e85a72" points="486,102 496.500,102 496.500,135 499.500,140 490,158 480,146 486,134"/>
<!-- right pillar light face -->
<polygon fill="#df6878" points="1120,102 1150,106 1136,189 1152,188 1165,158 1164,212 1162,240 1140,239.500 1101,203"/>
<polygon fill="#d24f66" points="1150,106 1163,102 1165,158 1152,188 1136,189"/>
<!-- side piece -->
<polygon fill="#cc4a5e" points="1169,232 1213,198.400 1432,187.900 1432,222.800 1170,239"/>
<!-- top right navy -->
<polygon fill="#0e2a50" points="1308,102 1432,102 1432,150"/>
<polygon fill="#1e1838" points="1278,102 1308,102 1432,150 1432,161"/>
<polygon fill="#1b3b8c" points="1224,102 1236,102 1432,171 1432,178"/>
</g>
</svg>
  </div>
  <div class="abs" id="vscroll">
    <svg class="abs" style="left:0;top:0" width="18" height="846" viewBox="1430 102 18 846" fill="none">
      <path d="M1430.500 101v846" stroke="#464646"/>
      <path d="M1434.500 111l4-4 4 4" stroke="#9a9a9a" stroke-width="1.500"/>
      <path d="M1434.500 937.500l4 4 4-4" stroke="#9a9a9a" stroke-width="1.500"/>
      <rect x="1436.200" y="425" width="4.600" height="440" rx="2.300" fill="#5c5c5c"/>
    </svg>
  </div>
  <div class="abs" id="hscroll">
    <svg class="abs" style="left:0;top:0" width="1448" height="17" viewBox="0 948 1448 17" fill="none">
      <path d="M10 952l-4 4 4 4" stroke="#9a9a9a" stroke-width="1.500"/>
      <path d="M1420.500 952l4 4-4 4" stroke="#9a9a9a" stroke-width="1.500"/>
      <rect x="179" y="954" width="715" height="4" rx="2" fill="#5c5c5c"/>
    </svg>
  </div>
  <div class="abs" id="status">
    <div class="abs" style="left:4px;top:6px;width:101px;height:19px;background:#333;border:1px solid #292929;border-radius:3px"></div>
    <span class="t" style="left:10px;top:8px;font-size:13px;color:#dcdcdc;letter-spacing:.4px">250 %</span>
    <svg class="abs" style="left:94px;top:8px" width="10" height="16" viewBox="0 0 10 16" fill="none" stroke="#8c8c8c" stroke-width="1.200"><path d="M1.500 6l3.500-3.500 3.500 3.500M1.500 10l3.500 3.500 3.500-3.500"/></svg>
    <div class="abs" style="left:112px;top:6px;width:20.500px;height:18.500px;background:#5b5b5b;border-radius:3px"></div>
    <svg class="abs" style="left:117px;top:12px" width="11" height="8" viewBox="0 0 11 8" fill="none" stroke="#f0f0f0" stroke-width="1.500"><path d="M1.500 1.500l4 4 4-4"/></svg>
    <span class="t" style="left:146px;top:8px;font-size:13px;color:#d6d6d6;letter-spacing:.35px">00:00:01</span>
    <div class="abs" style="left:214px;top:6px;width:1px;height:19px;background:#505050"></div>
    <span class="t" style="left:220px;top:8px;font-size:12px;color:#d6d6d6"><span style="letter-spacing:-.6px">サイズ</span><span style="font-size:13px;letter-spacing:.25px">: 1920x1080, RGB (8 Bit), 3.66 MB</span></span>
  </div>
</div>
</body>
</html>
